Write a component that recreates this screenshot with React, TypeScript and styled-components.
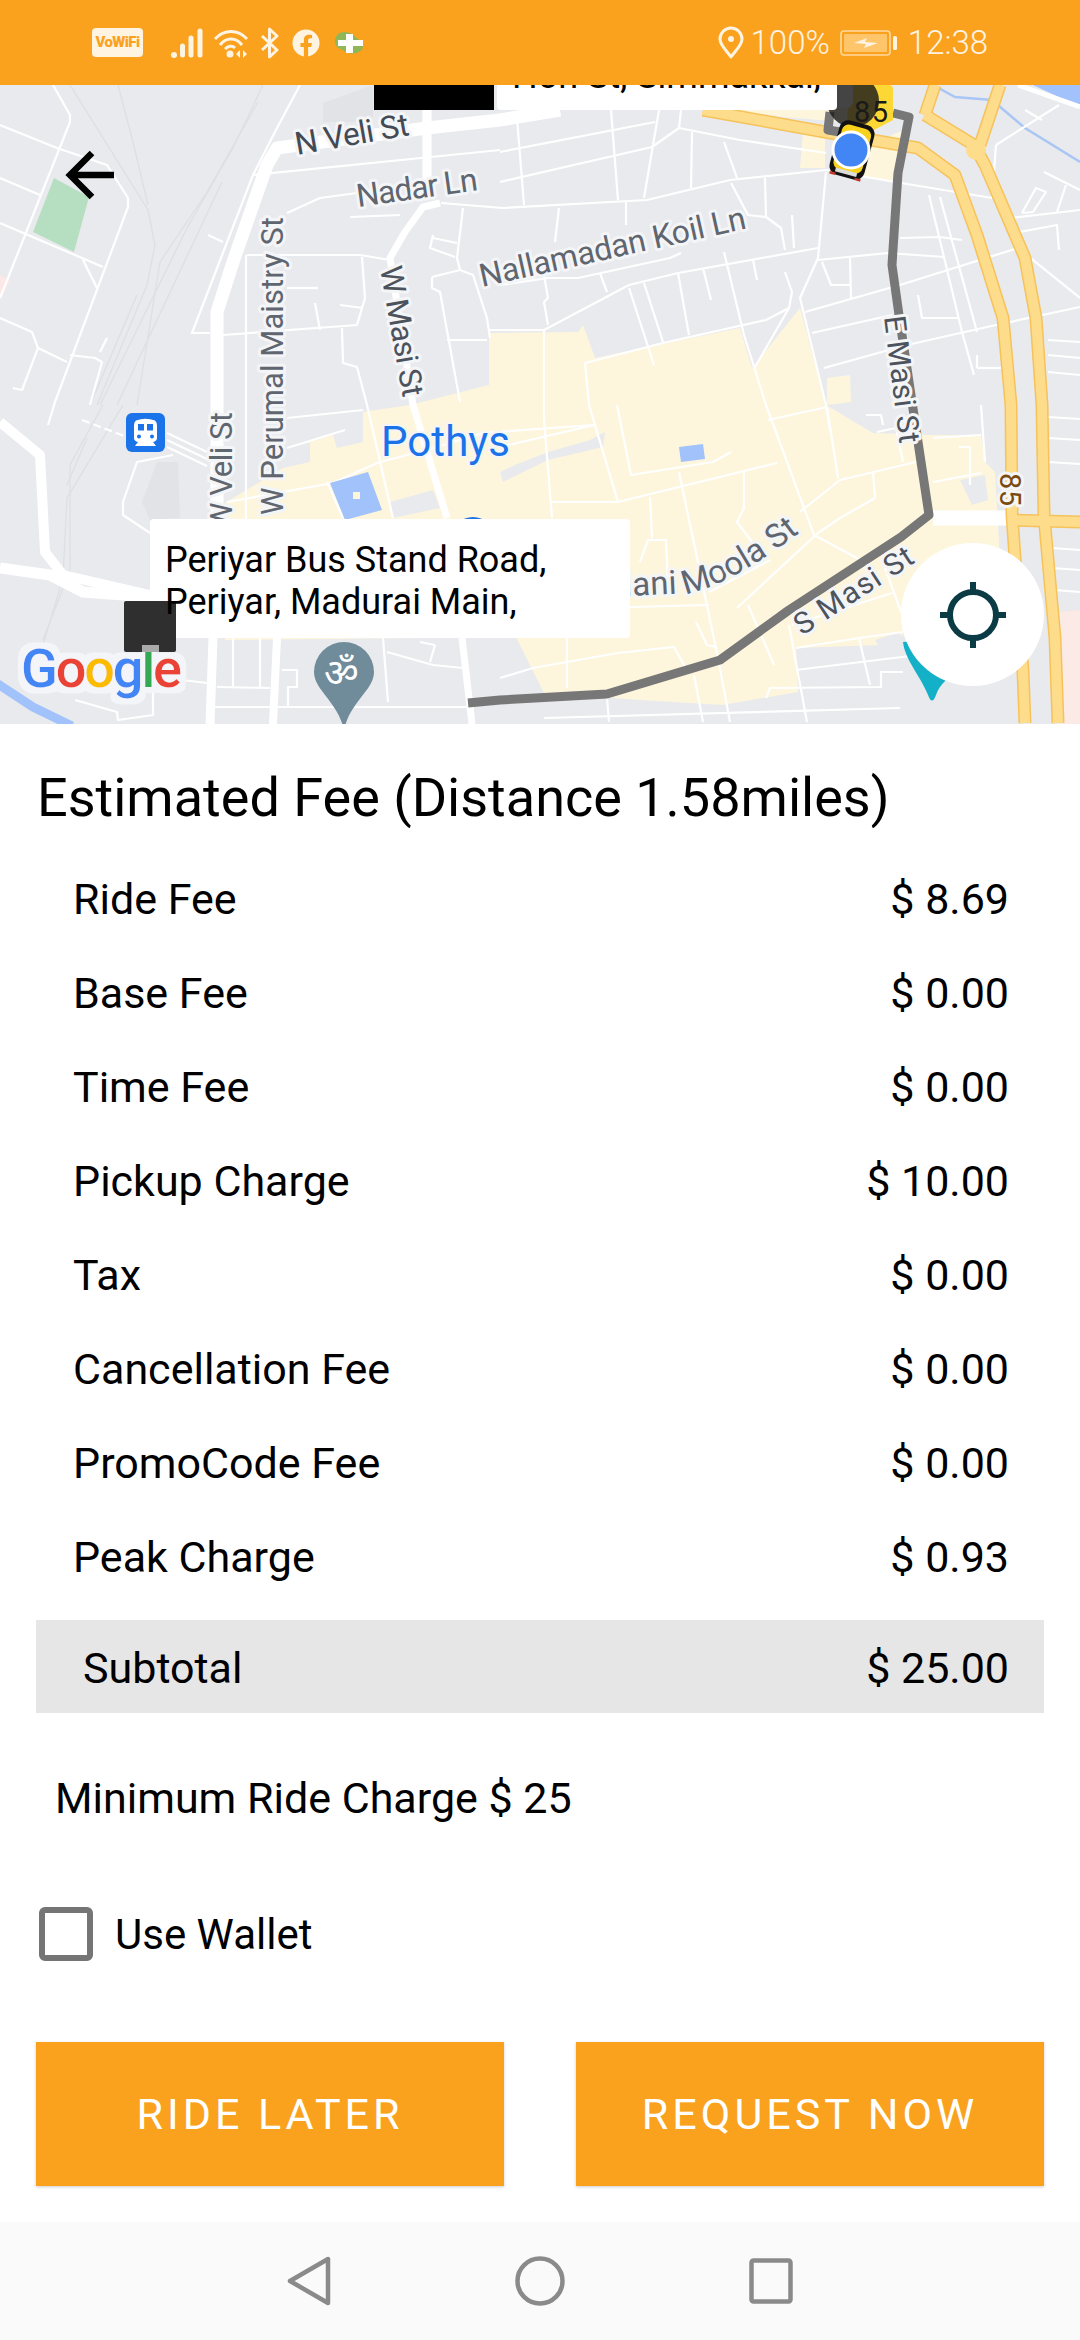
import * as React from 'react';
import styled, { createGlobalStyle } from 'styled-components';
import { FaFacebook } from 'react-icons/fa';

const ORANGE = '#faa21e';
const CREAM = '#fff3e2';

const GlobalStyle = createGlobalStyle`
  html, body {
    margin: 0;
    padding: 0;
    background: #fff;
  }
  body {
    font-family: Roboto, "Noto Sans", sans-serif;
    color: #000;
  }
`;

const Screen = styled.div`
  position: relative;
  width: 1080px;
  height: 2340px;
  overflow: hidden;
  background: #fff;
`;

const StatusBar = styled.div`
  position: relative;
  z-index: 2;
  display: flex;
  align-items: center;
  justify-content: space-between;
  height: 85px;
  padding: 0 92px 0 92px;
  box-sizing: border-box;
  background: ${ORANGE};
  color: ${CREAM};
  font-size: 33px;
`;

const StatusGroup = styled.div`
  display: flex;
  align-items: center;
`;

const VoWifi = styled.span`
  display: block;
  width: 51px;
  height: 29px;
  margin-right: 28px;
  border-radius: 4px;
  background: ${CREAM};
  color: ${ORANGE};
  font-size: 15px;
  font-weight: 900;
  line-height: 29px;
  letter-spacing: -0.6px;
  text-align: center;
`;

const StatusIcon = styled.svg<{ $gap?: number }>`
  display: block;
  flex: none;
  margin-right: ${props => props.$gap ?? 0}px;
`;

const FacebookMark = styled(FaFacebook)`
  display: block;
  width: 28px;
  height: 28px;
  margin-right: 14px;
  color: ${CREAM};
`;

const StatusText = styled.span<{ $gap?: number }>`
  margin-right: ${props => props.$gap ?? 0}px;
  line-height: 40px;
  font-weight: 300;
`;

const MapArea = styled.div`
  position: relative;
  height: 639px;
  overflow: hidden;
  background: #e9eaee;
`;

const MapDrawing = styled.svg`
  display: block;
  width: 1080px;
  height: 639px;
`;

const MapLabel = styled.text<{ $size: number; $tone: string; $halo?: number }>`
  font-family: Roboto, "Noto Sans", sans-serif;
  font-size: ${props => props.$size}px;
  fill: ${props => props.$tone};
  stroke: #f4f5f7;
  stroke-width: ${props => props.$halo ?? 6}px;
  stroke-linejoin: round;
  paint-order: stroke;
`;

const AddressCard = styled.div<{ $left: number; $top: number; $width: number }>`
  position: absolute;
  left: ${props => props.$left}px;
  top: ${props => props.$top}px;
  width: ${props => props.$width}px;
  height: 119px;
  box-sizing: border-box;
  padding: 20px 0 0 15px;
  border-radius: 4px;
  background: #fff;
  font-size: 36px;
  line-height: 42px;
  white-space: nowrap;
`;

const ClippedAddressCard = styled(AddressCard)`
  padding-top: 64px;
`;

const CardText = styled.div`
  position: relative;
  z-index: 1;
`;

const CardMarker = styled.div`
  position: absolute;
  left: -26px;
  top: 82px;
  width: 52px;
  height: 51px;
  border-radius: 2px;
  background: #2f2f2f;

  &::after {
    content: '';
    position: absolute;
    left: 18px;
    bottom: 0;
    width: 17px;
    height: 7px;
    background: #aaa;
  }
`;

const BlackMarker = styled.div`
  position: absolute;
  left: 374px;
  top: 0;
  width: 120px;
  height: 25px;
  background: #000;
`;

const BackButton = styled.svg`
  position: absolute;
  left: 62px;
  top: 62px;
  width: 58px;
  height: 56px;
`;

const LocateButton = styled.div`
  position: absolute;
  left: 901px;
  top: 458px;
  display: flex;
  align-items: center;
  justify-content: center;
  width: 143px;
  height: 143px;
  border-radius: 50%;
  background: #fff;
`;

const Title = styled.div`
  padding: 45px 37px 24px;
  font-size: 54px;
  line-height: 58px;
  white-space: nowrap;
`;

const FeeRow = styled.div`
  display: flex;
  align-items: center;
  justify-content: space-between;
  height: 94px;
  box-sizing: border-box;
  padding: 2px 71px 0 73px;
  font-size: 43px;
`;

const SubtotalRow = styled.div`
  display: flex;
  align-items: center;
  justify-content: space-between;
  height: 93px;
  box-sizing: border-box;
  margin: 17px 36px 0;
  padding: 2px 35px 0 47px;
  background: #e6e6e6;
  font-size: 43px;
`;

const MinimumCharge = styled.div`
  display: flex;
  align-items: center;
  height: 170px;
  padding-left: 55px;
  font-size: 43px;
`;

const WalletRow = styled.label`
  display: flex;
  align-items: center;
  height: 54px;
  margin: 24px 0 0 39px;
  font-size: 42px;
`;

const CheckBox = styled.span`
  display: block;
  width: 54px;
  height: 54px;
  margin-right: 22px;
  box-sizing: border-box;
  border: 6px solid #757575;
  border-radius: 6px;
`;

const ButtonRow = styled.div`
  display: flex;
  gap: 72px;
  margin-top: 81px;
  padding: 0 36px;
`;

const ActionButton = styled.button`
  flex: 1;
  height: 144px;
  padding: 0;
  border: none;
  background: ${ORANGE};
  color: #fff;
  font-family: Roboto, "Noto Sans", sans-serif;
  font-size: 43px;
  letter-spacing: 4px;
  box-shadow: 0 1px 3px rgba(0, 0, 0, 0.2);
`;

const NavBar = styled.div`
  display: flex;
  align-items: center;
  justify-content: center;
  gap: 184px;
  height: 118px;
  margin-top: 36px;
  background: #fafafa;
`;

const fees = [
  ['Ride Fee', '$ 8.69'],
  ['Base Fee', '$ 0.00'],
  ['Time Fee', '$ 0.00'],
  ['Pickup Charge', '$ 10.00'],
  ['Tax', '$ 0.00'],
  ['Cancellation Fee', '$ 0.00'],
  ['PromoCode Fee', '$ 0.00'],
  ['Peak Charge', '$ 0.93'],
];

const cream = [
  '225,503 283,468 310,462 310,442 333,435 337,448 363,442 363,412 410,405 489,385 489,333 578,332 583,325 595,358 740,328 752,368 800,308 826,405 873,433 929,435 981,435 985,462 995,472 1000,560 905,620 903,635 881,645 796,648 798,692 722,705 640,700 544,693 516,637 225,640',
  '827,378 850,375 851,402 827,405',
  '803,132 825,135 825,168 800,168',
  '870,145 903,130 892,182 860,175',
  '700,110 825,85 880,85 880,125',
];

const grayPatches = [
  '393,518 440,508 433,490 390,502',
  '503,482 548,460 603,447 605,432 590,440 548,452 515,465 500,472',
  '930,405 985,405 981,433 932,424',
  '960,480 985,475 988,500 972,505',
  '875,640 900,632 903,645 880,648',
];

const majorRoads = [
  { points: '560,110 500,120 427,128 277,148 267,165 233,262 217,312 217,530', width: 13 },
  { points: '0,422 40,455 45,552 63,575 150,595', width: 10 },
  { points: '0,568 50,575 83,592 150,597', width: 11 },
  { points: '213,638 210,724', width: 9 },
  { points: '277,638 273,724', width: 8 },
  { points: '440,203 423,207 405,232 390,258 413,405 447,518', width: 7 },
  { points: '462,638 472,724', width: 7 },
  { points: '427,85 427,195', width: 9 },
  { points: '933,518 1007,518', width: 15 },
  { points: '1018,85 1080,107', width: 5 },
];

const minorRoads = [
  '0,125 57,148 107,165 128,198 128,207 55,402 48,425',
  '53,85 70,115 70,122 0,298',
  '0,178 40,195',
  '0,223 103,267',
  '83,260 97,288',
  '0,318 32,332 38,348 67,362',
  '38,348 22,390 13,388',
  '70,355 95,358 102,362 90,405',
  '107,338 100,352',
  '208,235 223,242',
  '300,85 277,128 253,175 192,333 210,333',
  '253,175 500,150',
  '287,213 320,198 357,193',
  '350,217 400,215',
  '247,255 360,255 390,260',
  '246,255 246,520',
  '223,335 357,325 365,298 362,257',
  '340,305 363,308',
  '315,303 320,330',
  '287,288 318,288',
  '342,328 343,363 357,367 367,405 393,518',
  '433,235 430,248 455,257',
  '433,238 457,243',
  '463,208 457,258 460,270 473,275 487,318 490,338',
  '432,277 432,288 440,292 460,402',
  '432,277 460,270',
  '447,340 487,340',
  '500,152 655,122',
  '500,182 652,147 679,128 740,140 826,153',
  '441,203 503,208 647,200 730,180 826,170 895,182 992,198',
  '517,118 524,205',
  '611,110 618,200',
  '659,110 644,198',
  '681,110 679,128',
  '724,142 737,178',
  '692,132 691,188',
  '731,183 748,215 766,217 781,228 785,250',
  '765,178 766,217',
  '792,215 794,248',
  '626,202 626,225',
  '559,208 555,242',
  '826,172 818,258 800,298 826,405 830,430',
  '500,285 548,278 578,278 670,258 681,253',
  '544,275 548,298 544,302 548,325',
  '489,330 544,330 629,285 678,273 818,248',
  '544,330 544,420 552,518',
  '600,273 607,292',
  '629,288 654,365',
  '644,283 663,342',
  '678,273 689,335',
  '703,268 711,300',
  '724,252 744,335 766,405 814,535 870,565',
  '753,260 757,280',
  '785,272 792,292 789,308 766,320 663,343 585,363 589,405 618,502',
  '789,308 755,367',
  '822,262 831,285 851,285',
  '850,258 851,298',
  '818,260 888,253 944,257',
  '805,312 900,285 1018,248',
  '812,333 892,315',
  '918,295 922,318 959,318',
  '824,368 907,345 996,325 1080,307',
  '929,195 962,332 974,375',
  '940,197 977,332',
  '900,238 940,237 962,240',
  '996,145 1059,105',
  '996,145 992,198',
  '1025,110 1042,120',
  '1044,172 1080,190',
  '1022,213 1036,188 1046,192 1033,212 1022,213',
  '1010,218 1080,210',
  '1014,233 1057,225 1059,250',
  '1023,252 1080,298',
  '1057,212 1066,185',
  '1048,340 1080,342',
  '1048,355 1080,358',
  '1048,372 1080,375',
  '977,368 1008,368',
  '977,355 977,368',
  '500,447 594,425',
  '552,502 618,502 777,463',
  '617,405 631,475 713,462 731,452',
  '679,472 718,658 730,722',
  '768,420 827,407',
  '827,407 838,478',
  '800,512 840,480 916,462',
  '737,608 818,533 840,518 875,498 873,472',
  '744,472 744,508 737,522 752,542',
  '640,562 648,540 666,540 668,585',
  '630,607 709,605',
  '709,592 770,560',
  '748,605 774,665',
  '696,622 707,645 716,647',
  '789,625 807,722',
  '792,625 892,593',
  '885,568 901,612',
  '500,678 533,668 618,653 674,647 685,667',
  '650,497 652,538',
  '567,638 567,688',
  '607,698 609,722',
  '694,675 703,722',
  '544,718 900,708',
  '796,648 859,638 870,685',
  '796,670 918,655',
  '766,698 770,688 881,687 881,672 903,672',
  '859,638 903,632',
  '981,405 985,462',
  '933,482 981,473',
  '933,438 981,435',
  '959,447 970,447 970,485',
  '866,415 881,415 883,425',
  '877,432 896,428 903,462',
  '1048,417 1080,419',
  '1048,438 1080,440',
  '1048,462 1080,464',
  '1052,548 1080,550',
  '1052,568 1080,570',
  '1054,590 1080,592',
  '123,502 137,462 173,455',
  '123,502 123,515 150,533',
  '167,433 207,452',
  '167,440 207,459',
  '167,447 207,466',
  '287,418 363,410',
  '287,448 345,430',
  '227,502 333,483 377,463 433,448 483,433 594,425',
  '327,482 343,518',
  '233,638 233,687',
  '260,638 260,687',
  '217,687 270,688',
  '282,670 297,670 297,687 288,687 288,707',
  '213,707 467,707',
  '387,652 433,665 463,668',
  '383,638 388,702',
  '435,645 430,662',
  '420,642 435,645',
  '182,680 207,683',
  '75,700 117,712 118,720 153,715 153,688',
];

const rails = [
  '70,85 148,210 155,245 147,285 97,405',
  '118,85 133,142 148,205',
  '263,85 233,148 187,228 100,405',
  '258,102 207,192 160,262',
  '222,182 117,405',
  '160,262 137,405',
  '137,295 90,405',
  '123,405 67,498 63,578 43,645',
  '103,405 70,465 70,570',
  '87,438 67,485',
  '70,570 43,640',
];

const yellowRoads = [
  '703,110 825,132 918,148 955,175 977,235 1003,318 1011,405 1012,515 1023,672 1025,723',
  '925,115 974,145 985,165 1025,258 1036,318 1042,405 1044,515 1055,638 1058,723',
  '1009,520 1080,522',
  '935,85 925,115',
  '1000,85 980,145',
];

const labels = [
  { text: 'N Veli St', transform: 'translate(297 155) rotate(-10)', size: 32, tone: '#434a54', length: 115 },
  { text: 'Nadar Ln', transform: 'translate(358 207) rotate(-8)', size: 32, tone: '#5f6670', length: 122 },
  { text: 'Nallamadan Koil Ln', transform: 'translate(482 287) rotate(-12.5)', size: 32, tone: '#5f6670', length: 272 },
  { text: 'W Perumal Maistry St', transform: 'translate(283 515) rotate(-90)', size: 31, tone: '#5f6670', length: 298 },
  { text: 'W Masi St', transform: 'translate(380 268) rotate(80)', size: 31, tone: '#4d535c', length: 132 },
  { text: 'W Veli St', transform: 'translate(232 530) rotate(-90)', size: 31, tone: '#5f6670', length: 118 },
  { text: 'E Masi St', transform: 'translate(884 317) rotate(83)', size: 30, tone: '#4d535c', length: 128 },
  { text: 'S Masi St', transform: 'translate(802 636) rotate(-33)', size: 30, tone: '#4d535c', length: 136 },
  { text: '85', transform: 'translate(1000 473) rotate(90)', size: 29, tone: '#7a4a10', length: 33 },
];

const googleLetters = [
  ['G', '#4285f4'],
  ['o', '#ea4335'],
  ['o', '#fbbc05'],
  ['g', '#4285f4'],
  ['l', '#34a853'],
  ['e', '#ea4335'],
];

const MapPicture: React.FC = () => (
  <MapDrawing viewBox="0 85 1080 639">
    <defs>
      <filter id="logo-halo" x="-10%" y="-20%" width="120%" height="140%">
        <feMorphology in="SourceAlpha" operator="dilate" radius="6" result="wide" />
        <feFlood floodColor="#f3f5f8" />
        <feComposite in2="wide" operator="in" result="halo" />
        <feMerge>
          <feMergeNode in="halo" />
          <feMergeNode in="SourceGraphic" />
        </feMerge>
      </filter>
      <clipPath id="mark-left">
        <rect x="826" y="80" width="27" height="28" rx="6" />
      </clipPath>
    </defs>

    <polygon points="0,275 10,280 0,300" fill="#fce8e6" />
    <polygon points="1058,612 1080,610 1080,724 1062,724" fill="#fbeae6" />
    <polygon points="1033,85 1080,85 1080,107" fill="#a1c2fa" />
    <polygon points="323,103 373,85 373,122 323,122" fill="#e2e3e6" />
    <polygon points="157,462 178,462 180,518 150,520 142,502" fill="#e1e3e6" />
    <polygon points="54,178 89,197 74,252 33,232" fill="#b5dfc0" />

    {cream.map(points => (
      <polygon key={points} points={points} fill="#fdf6dc" />
    ))}
    {grayPatches.map(points => (
      <polygon key={points} points={points} fill="#e9eaee" />
    ))}

    <polyline points="933,85 955,97 992,100 1025,128 1080,162" fill="none" stroke="#a9c6f5" strokeWidth="2.5" />
    <polyline points="-5,682 33,707 72,726" fill="none" stroke="#a1c2fa" strokeWidth="9" />

    {rails.map(points => (
      <polyline key={points} points={points} fill="none" stroke="#dddfe3" strokeWidth="1.3" />
    ))}
    {minorRoads.map(points => (
      <polyline key={points} points={points} fill="none" stroke="#fff" strokeWidth="2.2" strokeLinejoin="round" />
    ))}
    {majorRoads.map(road => (
      <polyline key={road.points} points={road.points} fill="none" stroke="#fff" strokeWidth={road.width} strokeLinejoin="round" />
    ))}
    <polyline points="82,420 127,437" fill="none" stroke="#fff" strokeWidth="2.2" strokeDasharray="8 4" />

    {yellowRoads.map(points => (
      <polyline key={points} points={points} fill="none" stroke="#f6c25a" strokeWidth="13" strokeLinejoin="round" />
    ))}
    {yellowRoads.map(points => (
      <polyline key={`${points}-in`} points={points} fill="none" stroke="#fddc8c" strokeWidth="10" strokeLinejoin="round" />
    ))}
    <circle cx="976" cy="150" r="10" fill="#fddc8c" />

    <polygon points="330,483 368,472 382,510 345,520" fill="#a1c2fa" />
    <rect x="353" y="492" width="7" height="7" fill="#fdf6dc" />
    <polygon points="679,447 703,444 705,459 681,462" fill="#a1c2fa" />
    <circle cx="473" cy="538" r="21" fill="#1a73e8" />

    <polyline
      points="830,112 828,130 846,133"
      fill="none"
      stroke="#777"
      strokeWidth="9"
      strokeLinejoin="round"
    />
    <polyline
      points="893,113 909,117 898,173 892,265 899,315 918,442 929,515 901,537 789,610 720,660 607,694 500,700 468,703"
      fill="none"
      stroke="#777"
      strokeWidth="9"
      strokeLinejoin="round"
    />

    {labels.map(label => (
      <MapLabel
        key={label.text}
        transform={label.transform}
        textLength={label.length}
        $size={label.size}
        $tone={label.tone}
      >
        {label.text}
      </MapLabel>
    ))}
    <path id="moola-road" d="M604 597 L690 593 Q735 583 808 526" fill="none" />
    <MapLabel $size={33} $tone="#5f6670">
      <textPath href="#moola-road">Mani Moola St</textPath>
    </MapLabel>
    <MapLabel x="381" y="456" textLength="129" $size={42} $tone="#1a73e8" $halo={4}>
      Pothys
    </MapLabel>

    <rect x="126" y="413" width="39" height="39" rx="6" fill="#1a73e8" />
    <path
      d="M136 420.5 Q145.5 417 155 420.5 Q157 422 157 425 V438 Q157 441 153 442 L156 446 H135 L138 442 Q134 441 134 438 V425 Q134 422 136 420.5Z"
      fill="#fff"
    />
    <rect x="138" y="424" width="6" height="6.5" fill="#1a73e8" />
    <rect x="147" y="424" width="6" height="6.5" fill="#1a73e8" />
    <circle cx="139" cy="436.5" r="2" fill="#1a73e8" />
    <circle cx="152" cy="436.5" r="2" fill="#1a73e8" />

    <path
      d="M344 642 A30 30 0 0 1 374 672 C374 690 350 702 344 730 C338 702 314 690 314 672 A30 30 0 0 1 344 642Z"
      fill="#708c9b"
    />
    <MapLabel x="324" y="686" textLength="40" $size={38} $tone="#fff" $halo={0}>
      ॐ
    </MapLabel>

    <path d="M903 642 C905 660 920 675 928 695 Q932 706 936 695 Q938 688 946 680 L930 640Z" fill="#14b0c8" />

    <g filter="url(#logo-halo)">
      <MapLabel x="21" y="687" textLength="161" $size={54} $tone="#4285f4" $halo={0} fontWeight="500">
        {googleLetters.map(([letter, colour], index) => (
          <tspan key={index} fill={colour}>
            {letter}
          </tspan>
        ))}
      </MapLabel>
    </g>

    <path d="M850 85 H889 Q893 85 893 90 V120 L872 131 L847 122Z" fill="#fdd835" />
    <circle cx="853" cy="101" r="26" fill="#1a1a1a" fillOpacity="0.82" />
    <circle cx="853" cy="101" r="26" fill="#444" clipPath="url(#mark-left)" />
    <MapLabel x="854" y="122" textLength="34" $size={29} $tone="#1a1a1a" $halo={0}>
      85
    </MapLabel>

    <g transform="rotate(15 852 150)">
      <rect x="834" y="122" width="36" height="56" rx="9" fill="#111" />
      <rect x="837" y="126" width="30" height="46" rx="7" fill="#f7d21c" />
      <rect x="841" y="171" width="22" height="4" fill="#ddd" />
      <rect x="836" y="176" width="6" height="2.5" fill="#c0392b" />
      <rect x="862" y="176" width="6" height="2.5" fill="#c0392b" />
    </g>
    <circle cx="851" cy="150" r="18" fill="#4285f4" stroke="#fff" strokeWidth="3" />
  </MapDrawing>
);

const App: React.FC = () => (
  <Screen>
    <GlobalStyle />
    <StatusBar>
      <StatusGroup>
        <VoWifi>VoWiFi</VoWifi>
        <StatusIcon width="32" height="30" viewBox="0 0 32 30" $gap={10}>
          <circle cx="3" cy="27" r="3" fill={CREAM} />
          <path d="M11.5 18V27M20 10V27M29 3V27" stroke={CREAM} strokeWidth="5" strokeLinecap="round" />
        </StatusIcon>
        <StatusIcon width="36" height="30" viewBox="0 0 36 30" fill="none" $gap={11}>
          <path d="M2 11C11 1 25 1 34 11M7 17C13 9 23 9 29 17M12 21C15 18 19 17 22 20" stroke={CREAM} strokeWidth="3" />
          <circle cx="17" cy="26" r="3.5" fill={CREAM} />
          <path d="M27 22 L23 26 L27 30ZM30 22 L34 26 L30 30Z" fill={CREAM} />
        </StatusIcon>
        <StatusIcon width="20" height="32" viewBox="0 0 20 32" fill="none" $gap={12}>
          <path d="M2 9 L17 23 L9.5 30 V2 L17 9 L2 23" stroke={CREAM} strokeWidth="3" strokeLinejoin="round" />
        </StatusIcon>
        <FacebookMark />
        <StatusIcon width="30" height="24" viewBox="0 0 30 24">
          <path d="M4 3 Q10 -1 18 3 L24 8 Q31 12 28 19 Q20 25 12 21 L3 16 Q-2 9 4 3Z" fill="#8fb755" />
          <path d="M12 3H19V9H29V15H19V22H12V15H4V9H12Z" fill="#fff" />
        </StatusIcon>
      </StatusGroup>
      <StatusGroup>
        <StatusIcon width="26" height="33" viewBox="0 0 26 33" fill="none" $gap={7}>
          <path d="M13 31 C8 24 2 19 2 13 A11 11 0 0 1 24 13 C24 19 18 24 13 31Z" stroke={CREAM} strokeWidth="3" strokeLinejoin="round" />
          <circle cx="13" cy="13" r="3" fill={CREAM} />
        </StatusIcon>
        <StatusText $gap={10}>100%</StatusText>
        <StatusIcon width="58" height="26" viewBox="0 0 58 26" fill="none" $gap={10}>
          <rect x="1" y="1" width="49" height="24" rx="3" stroke="#ffd9a0" strokeWidth="1.6" />
          <rect x="4" y="4" width="43" height="18" rx="1" fill="#fec56a" />
          <path d="M14 13 L27 8 L25 12 L38 13 L24 18 L26 14Z" fill={CREAM} />
          <rect x="53" y="6" width="4" height="14" rx="1.5" fill={CREAM} />
        </StatusIcon>
        <StatusText>12:38</StatusText>
      </StatusGroup>
    </StatusBar>

    <MapArea>
      <MapPicture />
      <ClippedAddressCard $left={497} $top={-94} $width={340}>
        <CardText>Hon St, Simmakkal,</CardText>
      </ClippedAddressCard>
      <BlackMarker />
      <AddressCard $left={150} $top={434} $width={480}>
        <CardMarker />
        <CardText>
          Periyar Bus Stand Road,
          <br />
          Periyar, Madurai Main,
        </CardText>
      </AddressCard>
      <BackButton viewBox="0 0 58 56" fill="none">
        <path d="M52 28H8M30 6L8 28L30 50" stroke="#000" strokeWidth="6.5" />
      </BackButton>
      <LocateButton>
        <svg width="68" height="68" viewBox="0 0 68 68" fill="none">
          <circle cx="34" cy="34" r="23" stroke="#0b3b45" strokeWidth="6" />
          <path d="M34 1V11M34 57V67M1 34H11M57 34H67" stroke="#0b3b45" strokeWidth="6" />
        </svg>
      </LocateButton>
    </MapArea>

    <Title>Estimated Fee (Distance 1.58miles)</Title>
    {fees.map(([label, amount]) => (
      <FeeRow key={label}>
        <span>{label}</span>
        <span>{amount}</span>
      </FeeRow>
    ))}
    <SubtotalRow>
      <span>Subtotal</span>
      <span>$ 25.00</span>
    </SubtotalRow>
    <MinimumCharge>Minimum Ride Charge $ 25</MinimumCharge>
    <WalletRow>
      <CheckBox />
      Use Wallet
    </WalletRow>
    <ButtonRow>
      <ActionButton>RIDE LATER</ActionButton>
      <ActionButton>REQUEST NOW</ActionButton>
    </ButtonRow>
    <NavBar>
      <svg width="44" height="50" viewBox="0 0 44 50" fill="none">
        <path d="M41 3V47L3 25Z" stroke="#8a8a8a" strokeWidth="4.5" strokeLinejoin="round" />
      </svg>
      <svg width="50" height="50" viewBox="0 0 50 50" fill="none">
        <circle cx="25" cy="25" r="22.5" stroke="#8a8a8a" strokeWidth="4.5" />
      </svg>
      <svg width="44" height="46" viewBox="0 0 44 46" fill="none">
        <rect x="2.5" y="2.5" width="39" height="41" rx="2" stroke="#8a8a8a" strokeWidth="4.5" />
      </svg>
    </NavBar>
  </Screen>
);

export default App;
